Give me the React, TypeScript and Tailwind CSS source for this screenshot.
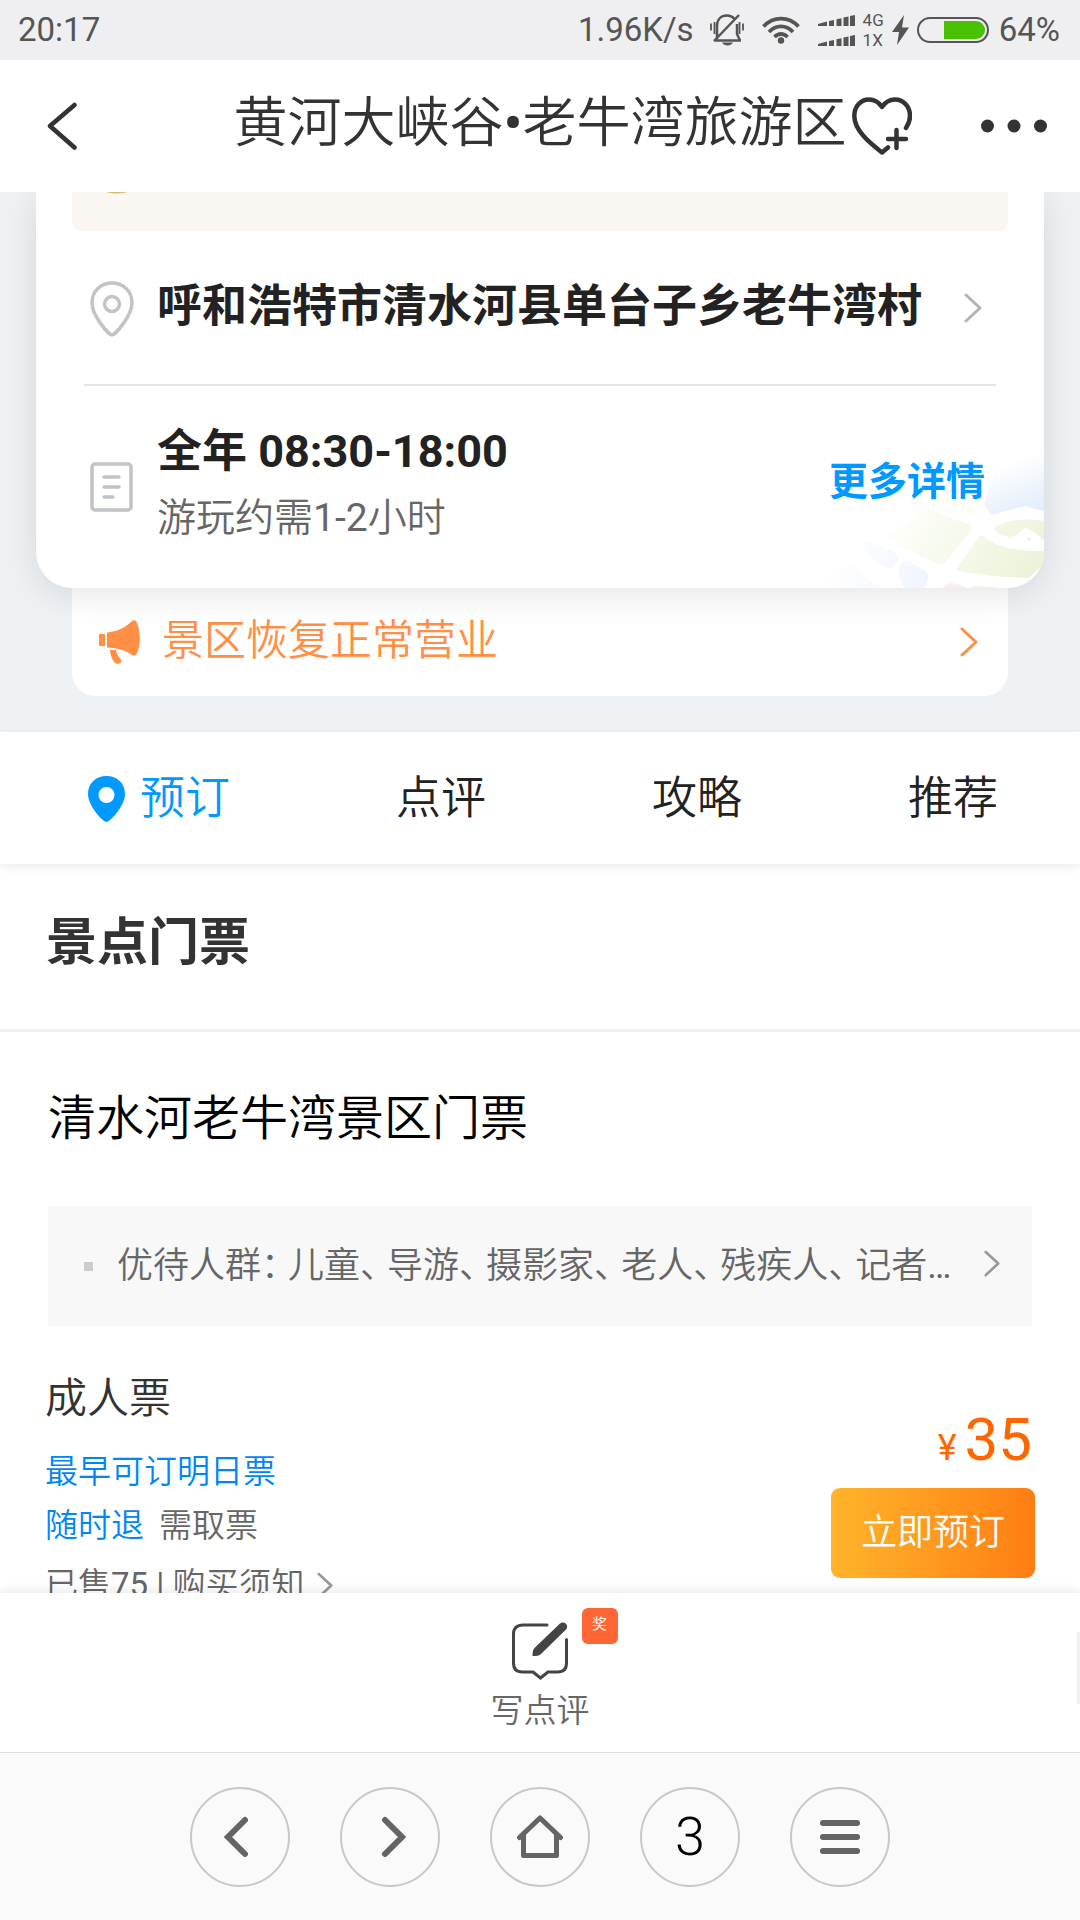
import type { ReactNode } from "react";

const tabs = ["预订", "点评", "攻略", "推荐"];

const discountGroups = ["儿童", "导游", "摄影家", "老人", "残疾人", "记者"];

const Chevron = ({ className }: { className: string }) => (
  <svg viewBox="0 0 18 30" fill="none" stroke="currentColor" strokeWidth="3" strokeLinecap="round" strokeLinejoin="round" className={className} aria-hidden="true">
    <path d="M2 2 16 15 2 28" />
  </svg>
);

const SignalBars = () => (
  <svg viewBox="0 0 37 11" fill="currentColor" className="h-[11px] w-[37px]" aria-hidden="true">
    <path d="M0 9 9 6.500V11H0zM11 6l5-1v6h-5zM18.500 4.200l5-1V11h-5zM25.500 2.500l5-1V11h-5zM32 1l5-1v11h-5z" />
  </svg>
);

const StatusBar = () => (
  <div className="flex h-[60px] shrink-0 items-center bg-[#efeff1] pr-5 pl-[18px] text-[33px] leading-[60px] text-[#555]">
    <span className="flex-1">20:17</span>
    <span>1.96K/s</span>
    <svg viewBox="0 0 34 32" fill="none" stroke="currentColor" strokeWidth="2.500" className="ml-4 h-8 w-[34px]" aria-hidden="true">
      <path d="M4 26.500h27M7 25V12C7 5.500 11 1.500 17 1.500c3 0 5.500 1 7 3M27 10v10l3 6.500M4 27 29 1" />
      <path d="M1 9.500v7M4.500 8v12M33 9.500v7M29.500 8v12" strokeWidth="1.800" />
      <path d="M12 28.500h11c-2 4-9 4-11 0z" fill="currentColor" stroke="none" />
    </svg>
    <svg viewBox="0 0 38 28" fill="none" stroke="currentColor" strokeWidth="3.800" className="ml-[18px] h-7 w-[38px]" aria-hidden="true">
      <path d="M1.500 10.500c10-10.500 25-10.500 35 0M7 16c7-7.500 17-7.500 24 0M12.500 21c4-4 9-4 13 0" />
      <circle cx="19" cy="24.500" r="3.200" fill="currentColor" stroke="none" />
    </svg>
    <div className="ml-[18px] flex flex-col gap-[9px]">
      <SignalBars />
      <SignalBars />
    </div>
    <div className="ml-2 flex flex-col text-[17px] leading-5">
      <span>4G</span>
      <span>1X</span>
    </div>
    <svg viewBox="0 0 17 30" fill="currentColor" className="ml-2 h-[30px] w-[17px]" aria-hidden="true">
      <path d="M12 0 0 17h7L5 30 17 12.500h-7z" />
    </svg>
    <div className="ml-2 flex h-[26px] w-[72px] justify-end rounded-full border-2 border-[#555] p-[2px]">
      <div className="w-[41px] rounded-r-full bg-[#48c200]" />
    </div>
    <span className="ml-[10px]">64%</span>
  </div>
);

const Header = () => (
  <header className="grid h-[132px] shrink-0 grid-cols-[1fr_auto_1fr] items-center bg-white text-[#333]">
    <button aria-label="返回" className="ml-[47px] w-[30px]">
      <svg viewBox="0 0 30 48" fill="none" stroke="currentColor" strokeWidth="4.500" strokeLinecap="round" strokeLinejoin="round" className="h-12 w-[30px]">
        <path d="M27.500 3 3 24l24.500 21.500" />
      </svg>
    </button>
    <h1 className="pb-1 text-[54px] leading-[72px] font-[350] whitespace-nowrap">
      黄河大峡谷<span className="font-medium">•</span>老牛湾旅游区
    </h1>
    <div className="flex items-center justify-between pr-[33px] pl-[6px]">
      <button aria-label="收藏">
        <svg viewBox="0 0 60 58" fill="none" stroke="currentColor" strokeWidth="4.500" strokeLinecap="round" strokeLinejoin="round" className="h-[58px] w-[60px]">
          <path d="M54 31c3-4.500 4-8 4-12C58 9 51 2.500 43 2.500c-6 0-10 3-13 7.500C27 5.500 23 2.500 17 2.500 9 2.500 2.300 9 2.300 19 2.300 35 22 49 30 55.500l6-5" />
          <path d="M44.500 33v18M36 42h18" />
        </svg>
      </button>
      <button aria-label="更多">
        <svg viewBox="0 0 66 14" fill="currentColor" className="h-[14px] w-[66px]">
          <circle cx="6.500" cy="7" r="6.500" />
          <circle cx="33" cy="7" r="6.500" />
          <circle cx="59.500" cy="7" r="6.500" />
        </svg>
      </button>
    </div>
  </header>
);

const MapArt = () => (
  <svg viewBox="0 0 288 150" className="absolute right-0 bottom-0 h-[150px] w-[288px]" aria-hidden="true">
    <defs>
      <linearGradient id="green" gradientUnits="userSpaceOnUse" x1="150" y1="60" x2="270" y2="140">
        <stop offset="0" stopColor="#fefffc" />
        <stop offset="1" stopColor="#ecf3da" />
      </linearGradient>
      <linearGradient id="blue" gradientUnits="userSpaceOnUse" x1="250" y1="24" x2="272" y2="78">
        <stop offset="0" stopColor="#ffffff" />
        <stop offset="1" stopColor="#e2ecfc" />
      </linearGradient>
      <linearGradient id="wash" gradientUnits="userSpaceOnUse" x1="80" y1="115" x2="180" y2="155">
        <stop offset="0" stopColor="#ffffff" />
        <stop offset="1" stopColor="#eef3fe" />
      </linearGradient>
    </defs>
    <path d="M288 14 240 32l-12 33 7 12 34-9 19 5z" fill="url(#blue)" />
    <path d="M180 60c15-2 28 2 36 5l8 14-22-9z" fill="#fcfdf3" />
    <path d="M173 70c14 8 28 12 39 16 4 2 4 5 2 8l-24 29c-3 4-6 4-10 2-20-8-36-18-50-27z" fill="url(#green)" />
    <path d="M237 90c10-6 25-11 51-7v20c-6-6-13-12-19-13-6 3-8 9-15 9-7-1-14-3-17-9z" fill="url(#green)" />
    <path d="M229 99c10 9 25 14 59 14v13l-15 14c-25 0-50-4-71-7-2-1-1-3 0-5l20-28c2-3 5-3 7-1z" fill="url(#green)" />
    <path d="M144 128c3-6 8-5 13-2 14 7 18 10 14 17l-3 7h-19c-6-6-8-14-5-22z" fill="url(#wash)" />
    <path d="M106 103c14 2 25 8 34 12 4 3 2 8-1 13-3 4-9 2-15-1-9-5-16-14-18-24z" fill="url(#wash)" />
    <path d="M53 150 98 124c6 12 16 20 28 26z" fill="url(#wash)" />
    <path d="M187 150c1-5 7-6 18-3l6 3z" fill="#fceeee" />
    <path d="M216 148l25 1v1h-25z" fill="#f6f4dc" />
    <circle cx="273" cy="101" r="2" fill="#f1f1f3" />
  </svg>
);

const InfoRow = ({ icon, children }: { icon: ReactNode; children: ReactNode }) => (
  <div className="flex flex-1 items-center pl-[54px]">
    <div className="w-[67px] shrink-0 text-[#c0c4c8]">{icon}</div>
    {children}
  </div>
);

const ScenicCard = () => (
  <section className="bg-[#eef2f5] px-9 pb-9">
    <div className="relative z-10 overflow-hidden rounded-b-[36px] bg-white shadow-[0_6px_36px_rgba(0,0,0,0.11)]">
      <div className="mx-9 h-[39px] overflow-hidden rounded-b-[9px] bg-[#faf7f2]">
        <svg viewBox="0 0 22 2" className="ml-[34px] h-[2px] w-[22px]" aria-hidden="true">
          <ellipse cx="11" cy="-1" rx="11" ry="2.500" fill="#d9b87c" />
        </svg>
      </div>
      <div className="flex h-[153px]">
        <InfoRow
          icon={
            <svg viewBox="0 0 44 56" fill="none" stroke="currentColor" strokeWidth="3.500" strokeLinejoin="round" className="mt-[2px] h-14 w-11" aria-hidden="true">
              <path d="M22 54c3 0 20-19 20-32C42 10 33 2 22 2S2 10 2 22c0 13 17 32 20 32z" />
              <circle cx="22" cy="23" r="7.500" />
            </svg>
          }
        >
          <a href="#address" className="flex flex-1 items-center justify-between pr-[62px]">
            <span className="pb-[2px] text-[45px] leading-[66px] font-bold text-[#222]">呼和浩特市清水河县单台子乡老牛湾村</span>
            <Chevron className="h-[30px] w-[18px] text-[#b3b3b3]" />
          </a>
        </InfoRow>
      </div>
      <div className="mx-12 h-[2px] bg-[#e6e6e6]" />
      <div className="relative flex h-[202px]">
        <MapArt />
        <InfoRow
          icon={
            <svg viewBox="0 0 44 50" fill="none" stroke="currentColor" strokeWidth="3.500" strokeLinecap="round" strokeLinejoin="round" className="h-[50px] w-11" aria-hidden="true">
              <rect x="2" y="2" width="39" height="46" rx="3" />
              <path d="M14 15h15M14 25h15M14 35h9" />
            </svg>
          }
        >
          <div className="flex-1 pb-1">
            <p className="text-[45px] leading-[66px] font-bold text-[#222]">全年 08:30-18:00</p>
            <p className="text-[39px] leading-[66px] font-[350] text-[#666]">
              游玩约需<span className="font-normal">1-2</span>小时
            </p>
          </div>
          <a href="#detail" className="relative mr-[59px] pb-[10px] text-[39px] leading-[54px] font-bold text-[#0099ff]">
            更多详情
          </a>
        </InfoRow>
      </div>
    </div>
    <a href="#notice" className="mx-9 flex h-[108px] items-center rounded-b-[24px] bg-white pr-[30px] pl-[27px] text-[#ff8f45]">
      <svg viewBox="0 0 42 44" fill="currentColor" className="h-11 w-[42px]" aria-hidden="true">
        <path d="M0 14h6v12H0zM8 12.500C18 12 27 7 33 1c2-1.500 3.500-1 4.500 1C42 11 42 27 37.500 34c-1 2-3 2-4.500 1-7-5-15-7-25-7.500z" />
        <path d="M11 30h6c.5 4 3 7 5.500 10.500.5 3-5 4.500-7 2C12.500 38.500 11 34 11 30z" />
      </svg>
      <span className="ml-[21px] flex-1 pb-[2px] text-[42px] leading-[60px] font-[350]">景区恢复正常营业</span>
      <Chevron className="h-[30px] w-[18px]" />
    </a>
  </section>
);

const Tabs = () => (
  <nav className="relative flex h-[132px] items-center justify-between bg-white pt-[2px] pr-[82px] pl-[88px] shadow-[0_3px_9px_rgba(0,0,0,0.08)]">
    {tabs.map((tab, index) => (
      <button key={tab} className={`flex items-center gap-[15px] text-[45px] leading-[66px] font-[350] ${index === 0 ? "text-[#0099ff]" : "text-[#222]"}`}>
        {index === 0 && (
          <svg viewBox="0 0 37 46" fill="currentColor" fillRule="evenodd" className="h-[46px] w-[37px]" aria-hidden="true">
            <path d="M18.500 46C15 46 0 30 0 18 0 7 8 0 18.500 0S37 7 37 18c0 12-15 28-18.500 28zm0-19a8 8 0 1 0 0-16 8 8 0 0 0 0 16z" />
          </svg>
        )}
        {tab}
      </button>
    ))}
  </nav>
);

const Tickets = () => (
  <section className="bg-white">
    <div className="flex h-[168px] items-center border-b-[3px] border-[#eee] pb-2 pl-[46px]">
      <h2 className="text-[51px] leading-[72px] font-bold text-[#333]">景点门票</h2>
    </div>
    <h3 className="py-[51px] pl-12 text-[48px] leading-[72px] font-[350] text-black">清水河老牛湾景区门票</h3>
    <a href="#discount" className="mx-12 flex h-[120px] items-center bg-[#f8f8f8] pr-8 pl-9 text-[#666]">
      <span className="size-[9px] bg-[#ccc]" />
      <span className="ml-6 flex-1 text-[36px] leading-[54px] font-[350] whitespace-nowrap">
        优待人群<span className="mr-[9px] [font-feature-settings:'halt']">：</span>
        {discountGroups.map((group, index) => (
          <span key={group}>
            {index > 0 && <span className="mr-[9px] [font-feature-settings:'halt']">、</span>}
            {group}
          </span>
        ))}
        <span className="font-normal">…</span>
      </span>
      <Chevron className="mb-[6px] h-[27px] w-4 text-[#999]" />
    </a>
    <div className="flex justify-between pt-[43px] pr-[45px] pl-[45px]">
      <div className="text-[33px] leading-[54px] font-[350] text-[#666]">
        <h4 className="mb-4 text-[42px] leading-[60px] text-[#333]">成人票</h4>
        <p className="text-[#0086f6]">最早可订明日票</p>
        <p className="flex gap-[15px]">
          <span className="text-[#0086f6]">随时退</span>
          <span>需取票</span>
        </p>
        <a href="#rules" className="mt-[5px] flex items-center">
          <span>
            已售<span className="font-normal">75 | </span>购买须知
          </span>
          <Chevron className="ml-3 h-[27px] w-4 text-[#999]" />
        </a>
      </div>
      <div className="mt-[35px] flex flex-col items-end">
        <p className="pr-[3px] text-[60px] leading-[72px] text-[#ff6600]">
          <span className="mr-2 text-[36px] leading-none">¥</span>35
        </p>
        <button className="mt-3 h-[90px] w-[204px] rounded-[9px] bg-linear-to-r from-[#ffb42a] to-[#ff7d13] text-[36px] font-[350] text-white">立即预订</button>
      </div>
    </div>
  </section>
);

const ReviewBar = () => (
  <div className="relative flex h-[159px] shrink-0 justify-center bg-white pt-[29px] shadow-[0_-3px_9px_rgba(0,0,0,0.08)]">
    <button className="relative flex flex-col items-center">
      <svg viewBox="0 0 56 58" fill="none" stroke="#444" strokeWidth="3" strokeLinecap="round" className="h-[58px] w-14" aria-hidden="true">
        <path d="M35 3H11C5 3 1.500 6.500 1.500 12v29c0 6 3.500 9 9 9H21l7.500 6 7.500-6h9.500c6 0 9-3 9-9V17.500" />
        <path d="M48 1.500c4-3 9 1.500 6.500 5.500L29 32c-2 2-5 2-8.500 2 0-3 0-6 2-8z" fill="#444" stroke="none" />
      </svg>
      <span className="mt-[7px] text-[33px] leading-12 font-[350] text-[#666]">写点评</span>
      <span className="absolute -top-[14px] -right-[28px] size-9 rounded-md bg-[#ff6633] text-[15px] leading-8 text-white">奖</span>
    </button>
    <span className="absolute top-[39px] right-0 h-[72px] w-[3px] bg-[#f0f0f0]" />
  </div>
);

const RoundButton = ({ label, children }: { label: string; children: ReactNode }) => (
  <button aria-label={label} className="flex size-[100px] items-center justify-center rounded-full border-2 border-[#c8c8c8] text-[#646464]">
    {children}
  </button>
);

const BrowserBar = () => (
  <nav className="relative flex h-[168px] shrink-0 items-center justify-center gap-[50px] border-t border-[#ddd] bg-[#fafafa]">
    <RoundButton label="后退">
      <svg viewBox="0 0 40 42" fill="none" stroke="currentColor" strokeWidth="6" strokeLinecap="round" className="mr-2 h-[42px] w-10">
        <path d="M29 4 12 21l17 17" />
      </svg>
    </RoundButton>
    <RoundButton label="前进">
      <svg viewBox="0 0 40 42" fill="none" stroke="currentColor" strokeWidth="6" strokeLinecap="round" className="ml-2 h-[42px] w-10">
        <path d="m11 4 17 17-17 17" />
      </svg>
    </RoundButton>
    <RoundButton label="主页">
      <svg viewBox="0 0 46 44" fill="none" stroke="currentColor" strokeWidth="5" strokeLinecap="round" strokeLinejoin="round" className="h-11 w-[46px]">
        <path d="M2.500 22.500 23 3l20.500 19.500M6.500 20v20.500h33V20" />
      </svg>
    </RoundButton>
    <RoundButton label="标签页">
      <span className="text-[54px] leading-none font-light text-black">3</span>
    </RoundButton>
    <RoundButton label="菜单">
      <svg viewBox="0 0 40 34" fill="currentColor" className="h-[34px] w-10">
        <rect width="40" height="6" rx="3" />
        <rect y="14" width="40" height="6" rx="3" />
        <rect y="28" width="40" height="6" rx="3" />
      </svg>
    </RoundButton>
  </nav>
);

export default function App() {
  return (
    <div className="flex h-screen flex-col overflow-hidden bg-white font-[Roboto,'Noto_Sans_CJK_SC',sans-serif]">
      <StatusBar />
      <Header />
      <main className="min-h-0 flex-1 overflow-hidden">
        <ScenicCard />
        <Tabs />
        <Tickets />
      </main>
      <ReviewBar />
      <BrowserBar />
    </div>
  );
}
